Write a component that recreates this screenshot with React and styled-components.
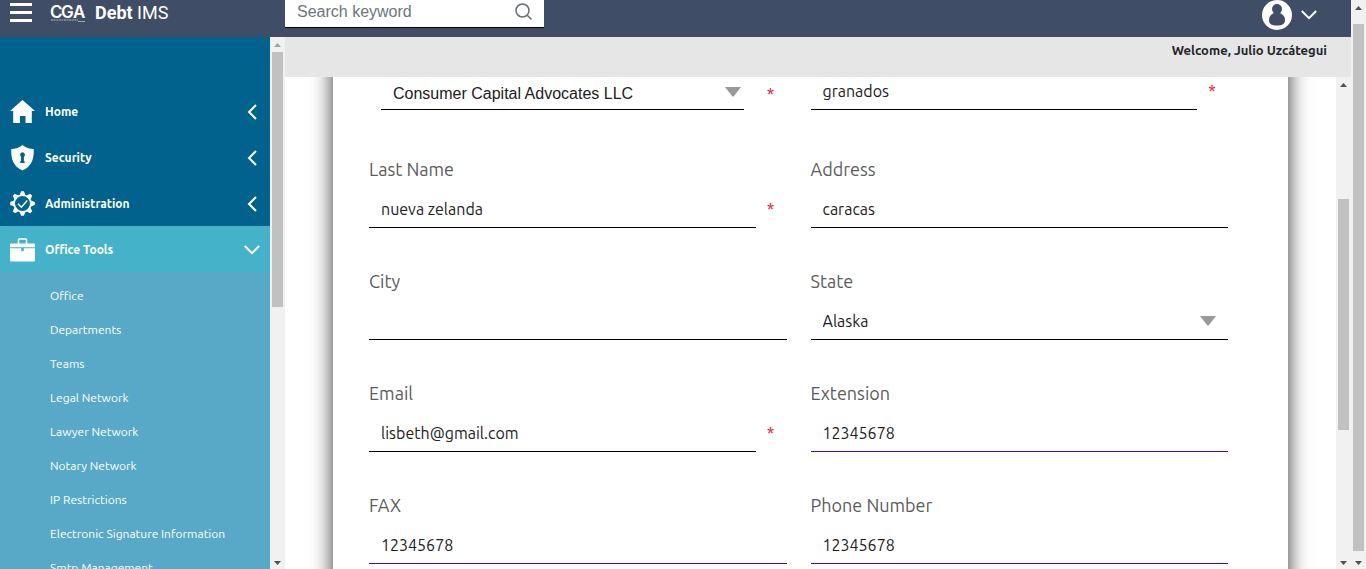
import React from "react";
import styled, { createGlobalStyle } from "styled-components";

const sans = '"Ubuntu", "Open Sans", "Noto Sans", sans-serif';
const arial = '"Liberation Sans", Arial, sans-serif';

const GlobalStyle = createGlobalStyle`
  * { box-sizing: border-box; }
  body { margin: 0; background: #fff; color: #212529; font-family: ${sans}; }
  button, input, select { font: inherit; color: inherit; }
`;

const Shell = styled.div`
  display: flex;
  height: 100vh;
  overflow: hidden;
`;

const Page = styled.div`
  flex: 1;
  min-width: 0;
  display: flex;
  flex-direction: column;
`;

const Header = styled.header`
  flex: none;
  display: flex;
  align-items: flex-start;
  height: 37px;
  background: #3f4d67;
`;

const Brand = styled.div`
  display: flex;
  align-items: center;
  width: 285px;
  height: 25px;
  padding-left: 10px;
`;

const IconButton = styled.button`
  display: flex;
  align-items: center;
  padding: 0;
  border: 0;
  background: none;
`;

const Logo = styled.a`
  display: flex;
  align-items: center;
  gap: 9px;
  margin-left: 19px;
  color: #fff;
  font: 400 18px/24px Roboto, sans-serif;
  text-decoration: none;
`;

const SearchBox = styled.form`
  display: flex;
  align-items: center;
  width: 259px;
  height: 28px;
  padding: 0 12px 4px;
  background: #fff;
  border-bottom: 1px solid #000;
`;

const SearchInput = styled.input`
  flex: 1;
  min-width: 0;
  padding: 0;
  border: 0;
  outline: 0;
  background: none;
  font: 16px/20px ${arial};
  &::placeholder { color: #6c757d; opacity: 1; }
`;

const Account = styled.button`
  display: flex;
  align-items: center;
  gap: 9px;
  height: 29px;
  margin: 0 34px 0 auto;
  padding: 0;
  border: 0;
  background: none;
`;

const Body = styled.div`
  flex: 1;
  min-height: 0;
  display: flex;
`;

const Sidebar = styled.nav`
  flex: none;
  width: 270px;
  padding-top: 51px;
  overflow: hidden;
  background: #00628d;
`;

const MenuItem = styled.button`
  display: flex;
  align-items: center;
  width: 100%;
  height: 46px;
  padding: 1px 10px 0;
  border: 0;
  background: ${(p) => (p.$open ? "#44b2c8" : "none")};
  color: #fff;
  font: 700 12px/16px ${sans};
  text-align: left;
`;

const MenuLabel = styled.span`
  flex: 1;
  margin-left: 10px;
`;

const SubMenu = styled.ul`
  margin: 0;
  padding: 7px 0;
  list-style: none;
  background: #58a9c8;
`;

const SubLink = styled.a`
  display: block;
  padding-left: 50px;
  color: #fff;
  font-size: 12px;
  line-height: 34px;
  text-decoration: none;
  white-space: nowrap;
`;

const Content = styled.div`
  flex: 1;
  min-width: 0;
  display: flex;
  flex-direction: column;
`;

const Welcome = styled.div`
  flex: none;
  height: 40px;
  padding: 4px 24px 0 0;
  background: #e6e6e6;
  font-size: 13px;
  font-weight: 700;
  line-height: 18px;
  text-align: right;
`;

const Workspace = styled.div`
  flex: 1;
  min-height: 0;
  display: flex;
`;

const FormArea = styled.main`
  flex: 1;
  min-width: 0;
  padding: 0 48px;
  overflow: hidden;
`;

const Card = styled.form`
  margin-top: -40px;
  padding: 40px 60px 64px 36px;
  background: #fff;
  box-shadow: 0 0 20px rgba(0, 0, 0, 0.8);
`;

const FieldGrid = styled.div`
  display: grid;
  grid-template-columns: 1fr 1fr;
  column-gap: 24px;
  row-gap: 41px;
  margin-bottom: ${(p) => (p.$first ? "47px" : "0")};
`;

const Label = styled.label`
  display: block;
  margin-bottom: 9px;
  color: #5c5c5c;
  font-size: 18px;
  line-height: 24px;
`;

const ControlRow = styled.div`
  display: flex;
  align-items: stretch;
  height: ${(p) => (p.$first ? "33px" : "38px")};
`;

const TextInput = styled.input`
  flex: 1;
  min-width: 0;
  padding: ${(p) => (p.$first ? "0 12px 4px" : "0 12px")};
  border: 0;
  border-bottom: 1px solid ${(p) => (p.$accent ? "#4400ee" : "#000")};
  border-radius: 0;
  outline: 0;
  background: #fff;
  color: #212121;
  font-size: 16px;
`;

const SelectWrap = styled.div`
  position: relative;
  flex: 1;
  display: flex;
  margin: ${(p) => (p.$inset ? "0 12px" : "0")};
`;

const Select = styled.select`
  appearance: none;
  width: 100%;
  padding: 0 12px;
  border: 0;
  border-bottom: 1px solid #000;
  border-radius: 0;
  outline: 0;
  background: #fff;
  color: #212121;
  font: 16px ${(p) => (p.$arial ? arial : sans)};
`;

const Caret = styled.svg`
  position: absolute;
  top: ${(p) => (p.$inset ? "10px" : "14px")};
  right: ${(p) => (p.$inset ? "3px" : "12px")};
  pointer-events: none;
`;

const Star = styled.span`
  width: 31px;
  padding-right: 1px;
  color: #ff0033;
  font-size: 16px;
  line-height: ${(p) => (p.$high ? "28px" : p.$first ? "34px" : "38px")};
  text-align: center;
`;

const Track = styled.div`
  flex: none;
  display: flex;
  flex-direction: column;
  align-items: center;
  width: 15px;
  overflow: hidden;
  background: #f1f1f1;
`;

const Arrow = styled.svg`
  flex: none;
  margin-top: ${(p) => (p.$end ? "auto" : "0")};
`;

const Thumb = styled.div`
  width: 11px;
  height: ${(p) => p.$size};
  margin-top: ${(p) => p.$offset || "0"};
  background: #c1c1c1;
`;

function Scrollbar({ size, offset, atTop }) {
  return (
    <Track aria-hidden="true">
      <Arrow width="15" height="15" viewBox="0 0 15 15">
        <path d="M4 10h7L7.500 6z" fill={atTop ? "#a3a3a3" : "#505050"} />
      </Arrow>
      <Thumb $size={size} $offset={offset} />
      <Arrow $end width="15" height="15" viewBox="0 0 15 15">
        <path d="M4 7h7l-3.500 4z" fill="#505050" />
      </Arrow>
    </Track>
  );
}

function Chevron({ open }) {
  return open ? (
    <svg width="16" height="11" viewBox="0 0 16 11" fill="none" stroke="#fff" strokeWidth="2">
      <path d="M.8 2L8 9.200 15.200 2" />
    </svg>
  ) : (
    <svg width="18" height="16" viewBox="0 0 18 16" fill="none" stroke="#fff" strokeWidth="2">
      <path d="M14 1L7 8l7 7" />
    </svg>
  );
}

const HomeIcon = () => (
  <svg width="25" height="25" viewBox="0 0 25 25" fill="#fff">
    <path d="M12.500 1L25 12h-3.200V24h-6.300v-7h-5.500V24H3.200V12H0z" />
  </svg>
);

const ShieldIcon = () => (
  <svg width="25" height="26" viewBox="0 0 25 26" fill="#fff">
    <path
      fillRule="evenodd"
      d="M12.500 0C9.500 2.700 5.500 3.800 1.300 4c-.5 9 1.700 17.500 11.200 21.500C22 21.500 24.200 13 23.700 4 19.500 3.800 15.500 2.700 12.500 0zm0 7.200a2.500 2.500 0 0 1 1.400 4.500v4.600h.8V18h-4.400v-1.700h.8v-4.600a2.500 2.500 0 0 1 1.400-4.500z"
    />
  </svg>
);

const GearIcon = () => (
  <svg width="25" height="25" viewBox="0 0 26 26" fill="none" stroke="#fff">
    <circle cx="13" cy="13" r="8.700" strokeWidth="1.800" />
    {[0, 45, 90, 135, 180, 225, 270, 315].map((a) => (
      <path key={a} d="M10 4.500L11.500 .2h3l1.500 4.300z" fill="#fff" stroke="none" transform={`rotate(${a} 13 13)`} />
    ))}
    <path d="M8.300 13.200l3.500 3.600 6.200-7" strokeWidth="1.500" />
  </svg>
);

const BriefcaseIcon = () => (
  <svg width="25" height="24" viewBox="0 0 25 24" fill="#fff">
    <path d="M8.500 6V1.800q0-.8.8-.8h6.400q.8 0 .8.800V6" fill="none" stroke="#fff" strokeWidth="1.500" />
    <path d="M1 5.500h23a1 1 0 0 1 1 1v2.800H0V6.500a1 1 0 0 1 1-1z" />
    <path d="M0 10.300h11.200v3h2.600v-3H25V22.500a1 1 0 0 1-1 1H1a1 1 0 0 1-1-1z" />
  </svg>
);

const LogoMark = () => (
  <svg width="35" height="24" viewBox="0 0 35 24" fill="#fff" overflow="visible">
    <text y="17" x="-1 10 22" fontFamily="Inter, sans-serif" fontSize="17" fontWeight="600">CGA</text>
    <path d="M0 19h27" stroke="#fff" strokeWidth="1" strokeDasharray="2 .6" opacity=".6" />
    <path d="M27 20.500h7" stroke="#fff" strokeWidth="1" opacity=".5" />
  </svg>
);

const MENU = [
  ["Home", HomeIcon],
  ["Security", ShieldIcon],
  ["Administration", GearIcon],
  ["Office Tools", BriefcaseIcon, true],
];

const OFFICE_LINKS = [
  "Office", "Departments", "Teams", "Legal Network", "Lawyer Network",
  "Notary Network", "IP Restrictions", "Electronic Signature Information", "Smtp Management",
];

const FIELDS = [
  { id: "lastName", label: "Last Name", value: "nueva zelanda", required: true },
  { id: "address", label: "Address", value: "caracas" },
  { id: "city", label: "City", value: "" },
  { id: "state", label: "State", value: "Alaska", select: true },
  { id: "email", label: "Email", value: "lisbeth@gmail.com", required: true },
  { id: "extension", label: "Extension", value: "12345678", accent: true },
  { id: "fax", label: "FAX", value: "12345678", accent: true },
  { id: "phone", label: "Phone Number", value: "12345678", accent: true },
];

function SelectField({ id, value, inset, name }) {
  return (
    <SelectWrap $inset={inset}>
      <Select id={id} aria-label={name} $arial={inset} defaultValue={value}>
        <option>{value}</option>
      </Select>
      <Caret $inset={inset} width="16" height="10" viewBox="0 0 16 10">
        <path d="M0 0h16L9 9q-1 1-2 0z" fill="#999" />
      </Caret>
    </SelectWrap>
  );
}

function Field({ id, label, value, required, select, accent }) {
  return (
    <div>
      <Label htmlFor={id}>{label}</Label>
      <ControlRow>
        {select ? (
          <SelectField id={id} value={value} />
        ) : (
          <TextInput id={id} defaultValue={value} $accent={accent} />
        )}
        {required && <Star>*</Star>}
      </ControlRow>
    </div>
  );
}

export default function App() {
  return (
    <>
      <GlobalStyle />
      <Shell>
        <Page>
          <Header>
            <Brand>
              <IconButton aria-label="Toggle menu">
                <svg width="22" height="19" viewBox="0 0 22 19" fill="#fff">
                  <path d="M0 0h22v3H0zM0 8h22v3H0zM0 16h22v3H0z" />
                </svg>
              </IconButton>
              <Logo href="#">
                <LogoMark />
                <span><b>Debt</b> IMS</span>
              </Logo>
            </Brand>
            <SearchBox>
              <SearchInput aria-label="Search keyword" placeholder="Search keyword" />
              <IconButton type="button" aria-label="Search">
                <svg width="17" height="17" viewBox="0 0 17 17" fill="none" stroke="#666e78" strokeWidth="1.500">
                  <circle cx="7.500" cy="7.500" r="6.500" />
                  <path d="M12 12l4.500 4.500" />
                </svg>
              </IconButton>
            </SearchBox>
            <Account aria-label="Account">
              <svg width="30" height="30" viewBox="0 0 30 30">
                <circle cx="15" cy="15" r="15" fill="#fff" />
                <circle cx="15" cy="9" r="5" fill="#3f4d67" />
                <path d="M12 12h6c-.5 2 5 2 5 8 0 4-2.500 5.500-8 5.500S7 24 7 20c0-6 5.500-6 5-8z" fill="#3f4d67" />
              </svg>
              <Chevron open />
            </Account>
          </Header>
          <Body>
            <Sidebar>
              {MENU.map(([name, Icon, open]) => (
                <MenuItem key={name} $open={open} aria-expanded={!!open}>
                  <Icon />
                  <MenuLabel>{name}</MenuLabel>
                  <Chevron open={open} />
                </MenuItem>
              ))}
              <SubMenu>
                {OFFICE_LINKS.map((name) => (
                  <li key={name}><SubLink href="#">{name}</SubLink></li>
                ))}
              </SubMenu>
            </Sidebar>
            <Scrollbar atTop size="48%" />
            <Content>
              <Welcome>Welcome, Julio Uzcátegui</Welcome>
              <Workspace>
                <FormArea>
                  <Card>
                    <FieldGrid $first>
                      <ControlRow $first>
                        <SelectField inset id="company" name="Company" value="Consumer Capital Advocates LLC" />
                        <Star $first>*</Star>
                      </ControlRow>
                      <ControlRow $first>
                        <TextInput $first aria-label="First name" defaultValue="granados" />
                        <Star $high>*</Star>
                      </ControlRow>
                    </FieldGrid>
                    <FieldGrid>
                      {FIELDS.map((f) => <Field key={f.id} {...f} />)}
                    </FieldGrid>
                  </Card>
                </FormArea>
                <Scrollbar size="47%" offset="107px" />
              </Workspace>
            </Content>
          </Body>
        </Page>
        <Scrollbar size="calc(100% - 42px)" offset="9px" />
      </Shell>
    </>
  );
}
